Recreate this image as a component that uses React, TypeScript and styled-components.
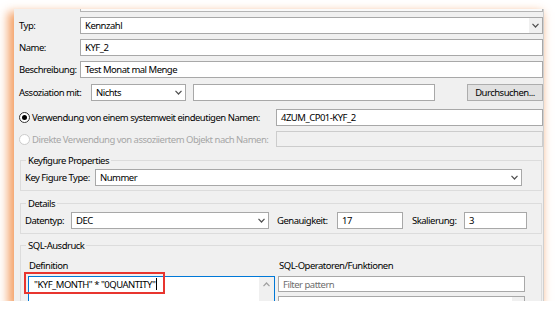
import React from "react";
import styled, { createGlobalStyle } from "styled-components";

const GlobalStyle = createGlobalStyle`
  body {
    margin: 0;
    background: #ffffff;
    font-family: "Noto Sans", "Open Sans", sans-serif;
    font-size: 9.5px;
    letter-spacing: -0.5px;
    color: #000000;
  }
`;

const Window = styled.div`
  margin: 9px 0 0 14px;
  width: 530px;
  height: 292px;
  box-sizing: border-box;
  padding-left: 5px;
  background: #f0f0f0;
  border-right: 1px solid #cfcfcf;
  overflow: hidden;
  box-shadow: -4px 5px 9px 2px rgba(240, 128, 48, 0.72);
`;

const TopStrip = styled.div`
  margin-left: 61px;
  height: 2px;
  background: #fafafa;
  border: 1px solid #b4b4b4;
  border-top: none;
`;

const Row = styled.div<{ $top: number; $h?: number }>`
  display: flex;
  align-items: center;
  margin-top: ${(p) => p.$top}px;
  height: ${(p) => p.$h ?? 17}px;
`;

const Label = styled.span<{ $w?: number; $disabled?: boolean; $gap?: number }>`
  flex: none;
  width: ${(p) => (p.$w ? `${p.$w}px` : "auto")};
  margin-left: ${(p) => p.$gap ?? 0}px;
  white-space: nowrap;
  color: ${(p) => (p.$disabled ? "#a6a6a6" : "#000")};
`;

const Input = styled.div<{ $w?: number; $disabled?: boolean; $gap?: number }>`
  box-sizing: border-box;
  height: 100%;
  flex: ${(p) => (p.$w ? "none" : "1")};
  width: ${(p) => (p.$w ? `${p.$w}px` : "auto")};
  margin-left: ${(p) => p.$gap ?? 0}px;
  border: 1px solid ${(p) => (p.$disabled ? "#cccccc" : "#a8a8a8")};
  background: ${(p) => (p.$disabled ? "#f0f0f0" : "#ffffff")};
  padding-left: 4px;
  display: flex;
  align-items: center;
  white-space: nowrap;
  overflow: hidden;
`;

const Placeholder = styled.span`
  color: #6d6d6d;
`;

const SelectBox = styled(Input)`
  padding-right: 0;
  justify-content: space-between;
`;

const ChevronBox = styled.span<{ $shaded?: boolean }>`
  width: 13px;
  height: 100%;
  display: flex;
  align-items: center;
  justify-content: center;
  background: ${(p) => (p.$shaded ? "#f0f0f0" : "transparent")};
`;

const Button = styled.div<{ $w: number; $gap: number }>`
  box-sizing: border-box;
  width: ${(p) => p.$w}px;
  margin-left: ${(p) => p.$gap}px;
  height: 100%;
  background: #e1e1e1;
  border: 1px solid #adadad;
  display: flex;
  align-items: center;
  justify-content: center;
`;

const Radio = styled.span<{ $checked?: boolean; $disabled?: boolean }>`
  box-sizing: border-box;
  flex: none;
  width: 11px;
  height: 11px;
  margin-right: 2px;
  border-radius: 50%;
  border: 1px solid ${(p) => (p.$disabled ? "#cccccc" : "#333333")};
  background: #ffffff;
  display: flex;
  align-items: center;
  justify-content: center;
  &::after {
    content: "";
    width: 5px;
    height: 5px;
    border-radius: 50%;
    background: ${(p) => (p.$checked ? "#000" : "transparent")};
  }
`;

const Group = styled.div<{ $top: number; $pad: string; $open?: boolean }>`
  position: relative;
  margin: ${(p) => p.$top}px 1px 0 1px;
  padding: ${(p) => p.$pad};
  border: 1px solid #dcdcdc;
  border-bottom: ${(p) => (p.$open ? "none" : "1px solid #dcdcdc")};
`;

const GroupTitle = styled.span`
  position: absolute;
  top: -7px;
  left: 5px;
  padding: 0 2px;
  background: #f0f0f0;
  line-height: 13px;
`;

const GroupRow = styled.div`
  display: flex;
  align-items: center;
  height: 17px;
`;

const Columns = styled.div`
  display: flex;
  gap: 3px;
  margin-left: 7px;
`;

const Column = styled.div<{ $w: number }>`
  position: relative;
  width: ${(p) => p.$w}px;
  display: flex;
  flex-direction: column;
`;

const ColumnLabel = styled.div`
  height: 12px;
  line-height: 12px;
  margin: 0 0 4px 1px;
`;

const TextArea = styled.div`
  box-sizing: border-box;
  height: 40px;
  border: 1px solid #0078d7;
  background: #ffffff;
  display: flex;
`;

const TextAreaBody = styled.div`
  flex: 1;
  padding: 1px 0 0 5px;
  line-height: 14px;
  white-space: nowrap;
`;

const Caret = styled.span`
  display: inline-block;
  width: 1px;
  height: 12px;
  margin-left: 1px;
  vertical-align: -2px;
  background: #000;
`;

const ScrollBar = styled.div`
  width: 15px;
  background: #f0f0f0;
  display: flex;
  justify-content: center;
  padding-top: 5px;
  box-sizing: border-box;
`;

const Highlight = styled.div`
  position: absolute;
  left: -4px;
  top: 12px;
  width: 141px;
  height: 22px;
  box-sizing: border-box;
  border: 2px solid #e8352f;
`;

const FilterInput = styled(Input)`
  flex: none;
  height: 16px;
`;

const ListBox = styled.div`
  box-sizing: border-box;
  margin-top: 4px;
  height: 30px;
  border: 1px solid #a8a8a8;
  background: #ffffff;
  display: flex;
  justify-content: flex-end;
`;

const ListScroll = styled.div`
  width: 12px;
  background: #f0f0f0;
`;

function Chevron({ up }: { up?: boolean }) {
  return (
    <svg width="7" height="5" viewBox="0 0 7 5">
      <polyline
        points={up ? "0.5,4.2 3.5,1 6.5,4.2" : "0.5,0.8 3.5,4 6.5,0.8"}
        fill="none"
        stroke={up ? "#a0a0a0" : "#505050"}
        strokeWidth="1.2"
      />
    </svg>
  );
}

function Select({
  value,
  w,
  gap,
  shaded,
}: {
  value: string;
  w?: number;
  gap?: number;
  shaded?: boolean;
}) {
  return (
    <SelectBox $w={w} $gap={gap}>
      <span>{value}</span>
      <ChevronBox $shaded={shaded}>
        <Chevron />
      </ChevronBox>
    </SelectBox>
  );
}

export default function App() {
  return (
    <>
      <GlobalStyle />
      <Window>
        <TopStrip />
        <Row $top={5}>
          <Label $w={61}>Typ:</Label>
          <Select value="Kennzahl" shaded />
        </Row>
        <Row $top={5}>
          <Label $w={61}>Name:</Label>
          <Input>KYF_2</Input>
        </Row>
        <Row $top={5}>
          <Label $w={61}>Beschreibung:</Label>
          <Input>Test Monat mal Menge</Input>
        </Row>
        <Row $top={6}>
          <Label $w={72}>Assoziation mit:</Label>
          <Select value="Nichts" w={95} />
          <Input $w={242} $gap={7} />
          <Button $w={76} $gap={32}>
            Durchsuchen...
          </Button>
        </Row>
        <Row $top={8}>
          <Radio $checked />
          <Label $w={244}>Verwendung von einem systemweit eindeutigen Namen:</Label>
          <Input>4ZUM_CP01-KYF_2</Input>
        </Row>
        <Row $top={5} $h={16}>
          <Radio $disabled />
          <Label $w={244} $disabled>
            Direkte Verwendung von assoziiertem Objekt nach Namen:
          </Label>
          <Input $disabled />
        </Row>

        <Group $top={13} $pad="8px 19px 4px 4px">
          <GroupTitle>Keyfigure Properties</GroupTitle>
          <GroupRow>
            <Label $w={70}>Key Figure Type:</Label>
            <Select value="Nummer" />
          </GroupRow>
        </Group>

        <Group $top={12} $pad="8px 17px 4px 4px">
          <GroupTitle>Details</GroupTitle>
          <GroupRow>
            <Label $w={46}>Datentyp:</Label>
            <Select value="DEC" w={198} />
            <Label $w={60} $gap={8}>
              Genauigkeit:
            </Label>
            <Input $w={66}>17</Input>
            <Label $w={52} $gap={9}>
              Skalierung:
            </Label>
            <Input $w={63}>3</Input>
          </GroupRow>
        </Group>

        <Group $top={11} $pad="14px 0 0 0" $open>
          <GroupTitle>SQL-Ausdruck</GroupTitle>
          <Columns>
            <Column $w={247}>
              <ColumnLabel>Definition</ColumnLabel>
              <TextArea>
                <TextAreaBody>
                  "KYF_MONTH" * "0QUANTITY"
                  <Caret />
                </TextAreaBody>
                <ScrollBar>
                  <Chevron up />
                </ScrollBar>
              </TextArea>
              <Highlight />
            </Column>
            <Column $w={247}>
              <ColumnLabel>SQL-Operatoren/Funktionen</ColumnLabel>
              <FilterInput>
                <Placeholder>Filter pattern</Placeholder>
              </FilterInput>
              <ListBox>
                <ListScroll />
              </ListBox>
            </Column>
          </Columns>
        </Group>
      </Window>
    </>
  );
}
